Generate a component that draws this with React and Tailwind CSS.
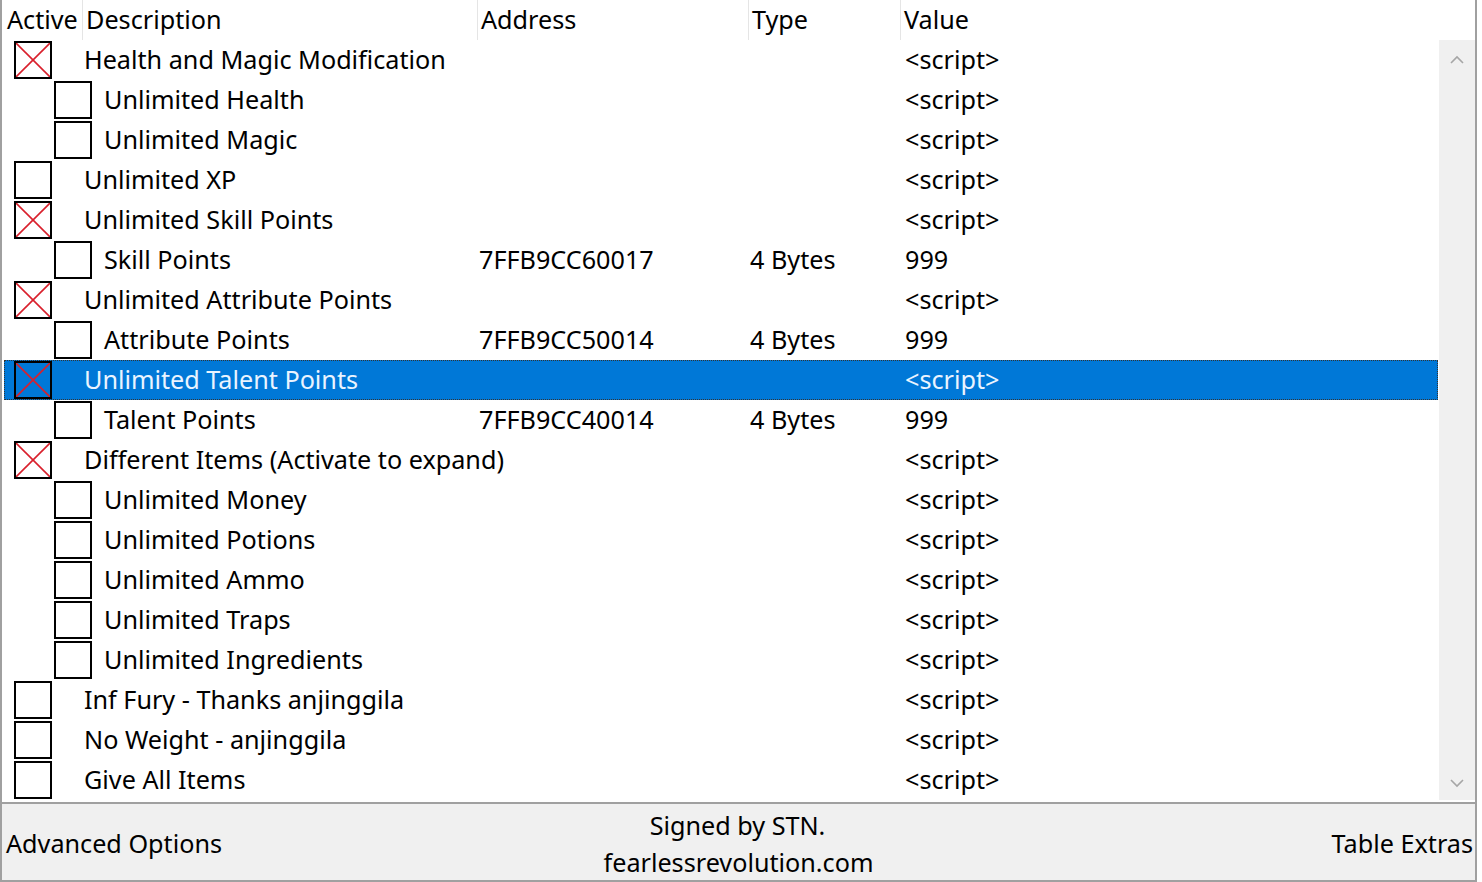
import React from "react";

const rows = [
  { l: 0, c: true, d: "Health and Magic Modification", v: "<script>" },
  { l: 1, d: "Unlimited Health", v: "<script>" },
  { l: 1, d: "Unlimited Magic", v: "<script>" },
  { l: 0, d: "Unlimited XP", v: "<script>" },
  { l: 0, c: true, d: "Unlimited Skill Points", v: "<script>" },
  { l: 1, d: "Skill Points", a: "7FFB9CC60017", t: "4 Bytes", v: "999" },
  { l: 0, c: true, d: "Unlimited Attribute Points", v: "<script>" },
  { l: 1, d: "Attribute Points", a: "7FFB9CC50014", t: "4 Bytes", v: "999" },
  { l: 0, c: true, s: true, d: "Unlimited Talent Points", v: "<script>" },
  { l: 1, d: "Talent Points", a: "7FFB9CC40014", t: "4 Bytes", v: "999" },
  { l: 0, c: true, d: "Different Items (Activate to expand)", v: "<script>" },
  { l: 1, d: "Unlimited Money", v: "<script>" },
  { l: 1, d: "Unlimited Potions", v: "<script>" },
  { l: 1, d: "Unlimited Ammo", v: "<script>" },
  { l: 1, d: "Unlimited Traps", v: "<script>" },
  { l: 1, d: "Unlimited Ingredients", v: "<script>" },
  { l: 0, d: "Inf Fury - Thanks anjinggila", v: "<script>" },
  { l: 0, d: "No Weight - anjinggila", v: "<script>" },
  { l: 0, d: "Give All Items", v: "<script>" },
];

function Box({ checked }) {
  return (
    <div className="relative w-[38px] h-[38px] border-2 border-black shrink-0">
      {checked && (
        <svg className="absolute inset-0" width="34" height="34" viewBox="0 0 34 34">
          <line x1="0" y1="0" x2="34" y2="34" stroke="#d9202c" strokeWidth="1.6" />
          <line x1="34" y1="0" x2="0" y2="34" stroke="#d9202c" strokeWidth="1.6" />
        </svg>
      )}
    </div>
  );
}

function Row({ r }) {
  const sel = r.s;
  return (
    <div
      className={
        "flex items-center h-[40px] " +
        (sel
          ? "bg-[#0078d7] text-[#eaf4ff] outline-1 outline-dotted outline-[#333] -outline-offset-1"
          : "text-black")
      }
    >
      <div className={"flex items-center w-[475px] " + (r.l === 0 ? "pl-[10px]" : "pl-[50px]")}>
        <Box checked={r.c} />
        <span className={"whitespace-nowrap pb-[1px] " + (r.l === 0 ? "ml-[32px]" : "ml-[12px]")}>{r.d}</span>
      </div>
      <div className="w-[271px] whitespace-nowrap pb-[1px]">{r.a || ""}</div>
      <div className="w-[155px] whitespace-nowrap pb-[1px]">{r.t || ""}</div>
      <div className="whitespace-nowrap pb-[1px]">{r.v}</div>
    </div>
  );
}

function Chevron({ up }) {
  return (
    <svg width="14" height="10" viewBox="0 0 14 10">
      <polyline
        points={up ? "1,8 7,2 13,8" : "1,2 7,8 13,2"}
        fill="none"
        stroke="#a6a6a6"
        strokeWidth="1.6"
      />
    </svg>
  );
}

export default function App() {
  return (
    <div
      className="w-[1482px] h-[882px] bg-white overflow-hidden text-[25.2px] leading-none"
      style={{ fontFamily: '"Noto Sans", "Open Sans", sans-serif' }}
    >
      <div className="w-[1477px] h-[882px] flex flex-col border-l-2 border-r-2 border-b-2 border-[#a0a0a0]">
        {/* header */}
        <div className="flex h-[40px] items-center text-black shrink-0">
          <div className="w-[80px] h-full flex items-center pl-[5px] pb-[1px]">Active</div>
          <div className="w-[395px] h-full flex items-center pl-[3px] pb-[1px] border-l border-[#e5e5e5]">Description</div>
          <div className="w-[271px] h-full flex items-center pl-[3px] pb-[1px] border-l border-[#e5e5e5]">Address</div>
          <div className="w-[152px] h-full flex items-center pl-[3px] pb-[1px] border-l border-[#e5e5e5]">Type</div>
          <div className="flex-1 h-full flex items-center pl-[3px] pb-[1px] border-l border-[#e5e5e5]">Value</div>
        </div>
        {/* body */}
        <div className="flex h-[760px] shrink-0">
          <div className="flex-1 pl-[2px] pr-[1px]">
            {rows.map((r, i) => (
              <Row key={i} r={r} />
            ))}
          </div>
          <div className="w-[36px] bg-[#f0f0f0] flex flex-col items-center justify-between pt-[15px] pb-[12px]">
            <Chevron up />
            <Chevron />
          </div>
        </div>
        <div className="h-[2px] shrink-0 bg-white" />
        <div className="h-[2px] shrink-0 bg-[#a0a0a0]" />
        {/* footer */}
        <div className="flex-1 bg-[#f0f0f0] relative flex items-center justify-between pl-[4px] pr-[2px] pt-[4px] text-black">
          <span>Advanced Options</span>
          <div className="absolute left-0 right-0 top-[4px] bottom-0 flex flex-col items-center justify-center leading-[37px] pointer-events-none">
            <span className="ml-[-2px]">Signed by STN.</span>
            <span>fearlessrevolution.com</span>
          </div>
          <span>Table Extras</span>
        </div>
      </div>
    </div>
  );
}
